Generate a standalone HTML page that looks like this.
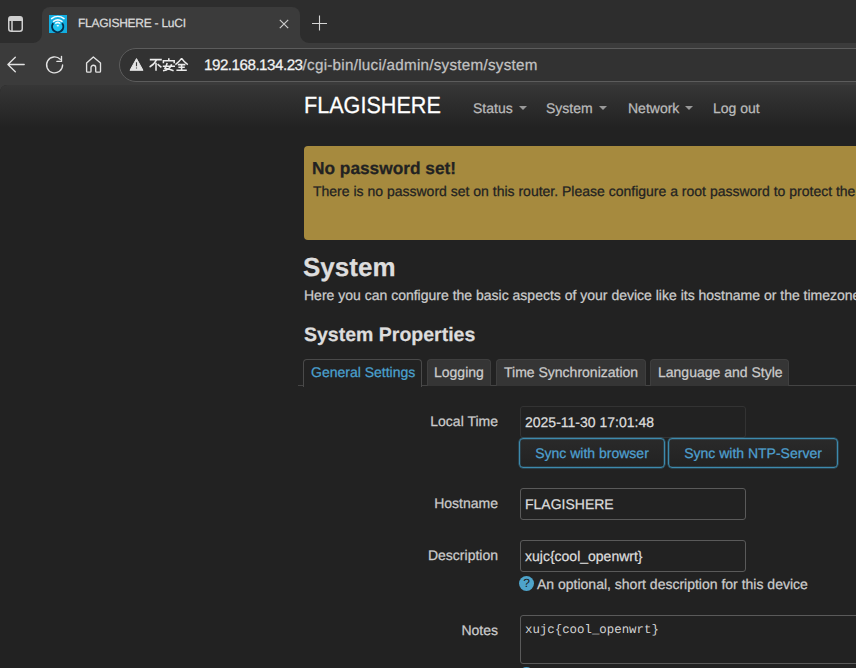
<!DOCTYPE html>
<html><head><meta charset="utf-8">
<style>
*{box-sizing:border-box;margin:0;padding:0}
html,body{width:856px;height:668px;overflow:hidden;background:#222;font-family:"Liberation Sans",sans-serif;text-rendering:geometricPrecision}
div,span{white-space:nowrap;-webkit-text-stroke:0.25px currentColor}
svg{position:absolute;overflow:visible}
#tabstrip{position:absolute;left:0;top:0;width:856px;height:43px;background:#2d2d2d}
#tab{position:absolute;left:42px;top:7px;width:258px;height:36px;background:#3b3b3b;border-radius:8px 8px 0 0}
#title{position:absolute;left:78px;top:16px;font-size:12px;letter-spacing:-0.25px;color:#dcdcdc}
#toolbar{position:absolute;left:0;top:43px;width:856px;height:50px;background:#3b3b3b}
#pill{position:absolute;left:119px;top:48px;width:800px;height:34px;border:1px solid #5c5c5c;border-radius:17px;background:#323232}
#url{position:absolute;left:204px;top:57px;font-size:15.2px;color:#c2c2c2;letter-spacing:0.27px}
#url b{font-weight:normal;color:#f2f2f2;letter-spacing:-0.5px}
#page{position:absolute;left:0;top:85px;width:856px;height:583px;background:#222;overflow:hidden;border-top-left-radius:7px}
.hdr{position:absolute;left:0;top:0;width:856px;height:43px;background:linear-gradient(#363636,#222)}
.brand{position:absolute;left:304px;top:8px;font-size:21.6px;color:#fff;transform:scaleY(1.08);transform-origin:0 80%}
.nav{position:absolute;top:15px;font-size:14px;color:#bbb}
.caret{display:inline-block;width:0;height:0;border-left:4px solid transparent;border-right:4px solid transparent;border-top:4px solid #999;vertical-align:middle;margin-left:6px;margin-top:-2px}
.alert{position:absolute;left:304px;top:61px;width:700px;height:94px;background:#a68a3e;border-radius:4px}
.alert h4{position:absolute;left:8px;top:12px;font-size:17.3px;font-weight:bold;color:#222}
.alert p{position:absolute;left:9px;top:37px;font-size:14px;color:#222}
h2{position:absolute;left:303px;top:167px;font-size:26px;font-weight:bold;color:#ddd}
.desc{position:absolute;left:304px;top:202px;font-size:14px;color:#ccc}
h3{position:absolute;left:304px;top:239px;font-size:19.5px;font-weight:bold;color:#ddd}
.tabline{position:absolute;left:298px;top:300px;width:600px;height:1px;background:#444}
.ctab{position:absolute;top:274px;height:27px;border:1px solid #3f3f3f;border-bottom:none;border-radius:4px 4px 0 0;background:#353535;font-size:14px;color:#ccc;padding:4px 0 0 7px}
.ctab.act{background:#222;border-color:#4a4a4a;color:#4ba1cf;height:28px}
.lbl{position:absolute;font-size:14px;color:#ccc;text-align:right;width:200px}
.inp{position:absolute;left:520px;width:226px;height:32px;border:1px solid #5a5a5a;border-radius:3px;background:#222;font-size:14px;color:#ddd;padding:7px 0 0 4px}
.btn{position:absolute;top:353px;height:30px;border:1px solid #3d8aad;box-shadow:0 0 0 0.5px rgba(61,138,173,0.6),inset 0 0 0 0.5px rgba(61,138,173,0.5);border-radius:4px;background:linear-gradient(#2a2a2a,#222);font-size:14px;color:#4fa0d0;padding:6px 0 0 0;text-align:center}
.help{position:absolute;left:519px;top:491px;font-size:14px;color:#ccc}
.qi{display:inline-block;width:15px;height:15px;border-radius:7.5px;background:#4ea4cb;color:#1a1a1a;font-size:12px;text-align:center;line-height:15px;vertical-align:2px;margin-right:3px;-webkit-text-stroke:0}
.ta{position:absolute;left:520px;top:530px;width:400px;height:49px;border:1px solid #5a5a5a;border-radius:3px;background:#222;font-family:"Liberation Mono",monospace;font-size:12.4px;color:#d4d4d4;padding:7px 0 0 4px;-webkit-text-stroke:0}
</style></head><body>
<div id="tabstrip"></div>
<div id="tab"></div>
<div id="toolbar"></div>
<div id="pill"></div>
<svg style="left:0;top:0" width="856" height="86">
 <path d="M33 43 A9 9 0 0 0 42 34 V43Z M300 34 A9 9 0 0 0 309 43 H300Z" fill="#3b3b3b"/>
 <!-- sidebar icon -->
 <g fill="none" stroke="#cfcfcf" stroke-width="1.5">
  <rect x="8.75" y="16.75" width="13.5" height="14.5" rx="2.5"/>
  <path d="M12 21 V31"/>
 </g>
 <path d="M9 17.5 Q9 16.5 11 16.5 H20 Q22 16.5 22 18 V21 H9Z" fill="#cfcfcf"/>
 <!-- favicon -->
 <rect x="49" y="15" width="18" height="18" fill="#12ade0"/>
 <circle cx="57.7" cy="26.8" r="4.8" fill="#22c4f0"/>
 <path d="M53.2 23.3 A5.6 5.6 0 1 0 62.2 23.3" fill="none" stroke="#062f4c" stroke-width="1.9"/>
 <g fill="none" stroke="#f4fbff" stroke-width="1.6" stroke-linecap="round">
  <path d="M51.6 18.6 A10.4 10.4 0 0 1 64 18.6"/>
  <path d="M53.6 21.4 A7.2 7.2 0 0 1 62 21.4"/>
  <path d="M55.8 23.1 A3.6 3.6 0 0 1 59.8 23.1"/>
 </g>
 <ellipse cx="57.8" cy="25.7" rx="1.2" ry="0.8" fill="#fff"/>
 <!-- close & plus -->
 <g stroke="#d6d6d6" stroke-width="1.3" fill="none">
  <path d="M279.8 19.8 L288.2 28.2 M288.2 19.8 L279.8 28.2" stroke="#cdcdcd" stroke-width="1.2"/>
  <path d="M312 23.5 H327 M319.5 15.5 V30.5" stroke-width="1.1"/>
 </g>
 <!-- back/reload/home -->
 <g stroke="#e2e2e2" stroke-width="1.35" fill="none" stroke-linecap="round" stroke-linejoin="round">
  <path d="M15.3 57.2 L7.9 64.5 L15.3 71.8 M7.9 64.5 H24.2"/>
  <path d="M62.6 65 A8 8 0 1 1 60.3 59.3"/>
  <path d="M61.5 56.3 V61.4 H56.9"/>
  <path d="M86.6 63 L93.35 56.9 L100.5 63 V71.2 Q100.5 72.1 99.6 72.1 H96.6 Q95.7 72.1 95.7 71.2 V67.6 A2.35 2.35 0 0 0 91 67.6 V71.2 Q91 72.1 90.1 72.1 H87.5 Q86.6 72.1 86.6 71.2 Z"/>
 </g>
</svg>
<div id="title">FLAGISHERE - LuCI</div>
<svg style="left:0;top:0" width="300" height="86">
 <path d="M136.5 58.6 L143 70.3 H130Z" fill="#e4e4e4" stroke="#e4e4e4" stroke-width="1" stroke-linejoin="round"/>
 <path d="M136.5 62.2 V66.2 M136.5 67.5 V68.5" stroke="#3a3a3a" stroke-width="1.15"/>
 <g stroke="#ececec" stroke-width="1.55" fill="none">
  <path d="M149.8 59.6 H161.8 M156.6 59.8 Q154 64.5 149.6 67 M156 62.8 V70.8 M157.6 64.2 L161.4 67.4"/>
  <path d="M168.8 58.2 V60.4 M163.4 63.2 V60.8 H174.2 V63.2 M162.8 66.2 H175 M167.2 63 Q166.4 65.5 165 68.3 Q169.5 69.2 173.6 70.8 M171.6 64.2 Q170.2 69.4 163 70.8"/>
  <path d="M181.6 58.4 Q178.6 62.4 175.4 64.6 M181.6 58.4 Q184.4 62.4 187.8 64.6 M177.8 64.6 H185.4 M178.4 67.3 H184.8 M176.4 70.3 H186.8 M181.6 64.6 V70.3"/>
 </g>
</svg>
<div id="url"><b>192.168.134.23</b>/cgi-bin/luci/admin/system/system</div>
<div id="page">
<div class="hdr">
<div class="brand">FLAGISHERE</div>
<div class="nav" style="left:473px">Status<span class="caret"></span></div>
<div class="nav" style="left:546px">System<span class="caret"></span></div>
<div class="nav" style="left:628px">Network<span class="caret"></span></div>
<div class="nav" style="left:713px">Log out</div>
</div>
<div class="alert"><h4>No password set!</h4><p>There is no password set on this router. Please configure a root password to protect the web interface.</p></div>
<h2>System</h2>
<div class="desc">Here you can configure the basic aspects of your device like its hostname or the timezone.</div>
<h3>System Properties</h3>
<div class="tabline"></div>
<div class="ctab act" style="left:303px;width:119px">General Settings</div>
<div class="ctab" style="left:427px;width:64px;padding-left:6px">Logging</div>
<div class="ctab" style="left:496px;width:150px">Time Synchronization</div>
<div class="ctab" style="left:650px;width:139px">Language and Style</div>
<div class="lbl" style="left:298px;top:328px">Local Time</div>
<div class="inp" style="top:321px;border-color:#333">2025-11-30 17:01:48</div>
<div class="btn" style="left:519px;width:146px">Sync with browser</div>
<div class="btn" style="left:668px;width:170px">Sync with NTP-Server</div>
<div class="lbl" style="left:298px;top:410px">Hostname</div>
<div class="inp" style="top:403px">FLAGISHERE</div>
<div class="lbl" style="left:298px;top:462px">Description</div>
<div class="inp" style="top:455px">xujc{cool_openwrt}</div>
<div class="help"><span class="qi">?</span>An optional, short description for this device</div>
<div class="lbl" style="left:298px;top:537px">Notes</div>
<div class="ta">xujc{cool_openwrt}</div>
<div style="position:absolute;left:519px;top:582px;width:15px;height:15px;border-radius:7.5px;background:#4ea4cb"></div>
</div>
</body></html>
